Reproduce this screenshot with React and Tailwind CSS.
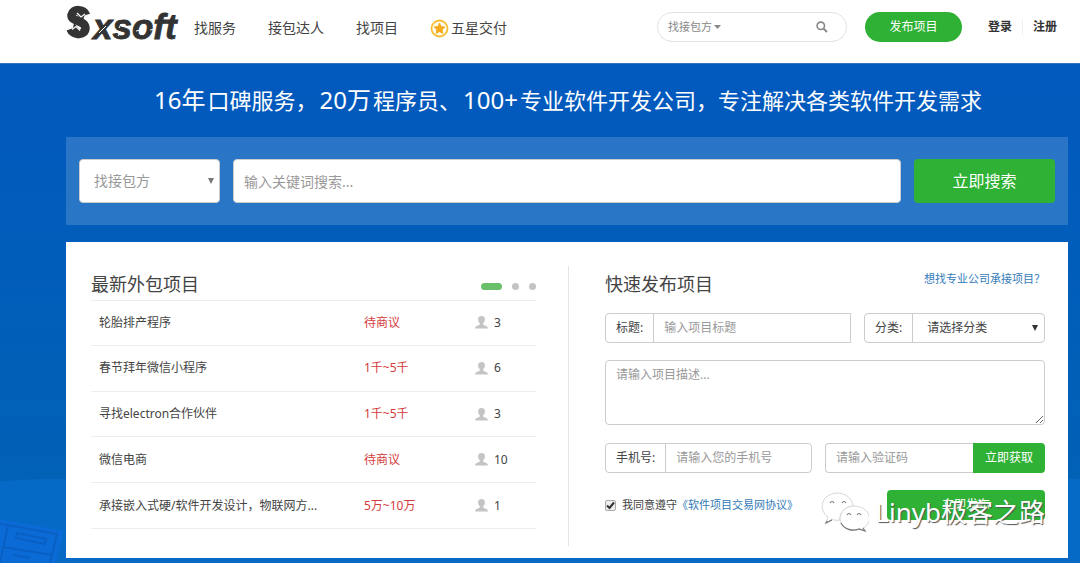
import React, { useState } from "react";

const NAV_LINKS = ["找服务", "接包达人", "找项目"];

const PROJECTS = [
  { title: "轮胎排产程序", budget: "待商议", people: 3 },
  { title: "春节拜年微信小程序", budget: "1千~5千", people: 6 },
  { title: "寻找electron合作伙伴", budget: "1千~5千", people: 3 },
  { title: "微信电商", budget: "待商议", people: 10 },
  { title: "承接嵌入式硬/软件开发设计，物联网方...", budget: "5万~10万", people: 1 },
];

function Logo() {
  return (
    <svg width="118" height="46" viewBox="0 0 118 46" className="overflow-visible" role="img" aria-label="Sxsoft">
      <path
        d="M20 15 C18 9 7 8 5.500 15 C5 22 19 20 19.500 28 C19.500 36 7 36 4.500 29"
        fill="none"
        stroke="#333"
        strokeWidth="8.500"
      />
      <path d="M9 13 L19 13 L17 21 Z M16 32 L6 32 L8 23 Z" fill="#333" />
      <path d="M11 13 L15 17 L19 14 M14 30.500 L10 26.500 L6 29.500" fill="none" stroke="#fff" strokeWidth="1.200" />
      <text
        x="27"
        y="39"
        fill="#333"
        stroke="#333"
        strokeWidth="0.800"
        fontSize="35"
        fontWeight="700"
        fontStyle="italic"
        fontFamily="Liberation Sans, sans-serif"
      >
        xsoft
      </text>
      <path
        d="M33 33 L40 26 M55 24 L53 28 M55 32 L52 36 M70 31 L75 30 M84 30 L89 29"
        stroke="#fff"
        strokeWidth="1"
      />
    </svg>
  );
}

function StarIcon() {
  return (
    <svg width="19" height="19" viewBox="0 0 19 19" aria-hidden="true">
      <circle cx="9.500" cy="9.500" r="8" fill="#fffdf2" stroke="#f6bd32" strokeWidth="1.800" />
      <path
        d="M9.500 4 L11.200 7.500 L15 8 L12.200 10.700 L12.900 14.500 L9.500 12.700 L6.100 14.500 L6.800 10.700 L4 8 L7.800 7.500 Z"
        fill="#f5ab1c"
        stroke="#f5ab1c"
        strokeWidth="0.800"
      />
    </svg>
  );
}

function SearchIcon() {
  return (
    <svg width="12" height="12" viewBox="0 0 12 12" fill="none" stroke="#888" aria-hidden="true">
      <circle cx="4.800" cy="4.800" r="3.700" strokeWidth="1.600" />
      <path d="M7.600 7.600 L11 11" strokeWidth="2" />
    </svg>
  );
}

function UserIcon() {
  return (
    <svg width="13" height="13" viewBox="0 0 13 13" fill="#c4c4c4" aria-hidden="true">
      <path d="M6.500 0 C8.900 0 10 1.500 9.900 3.500 C9.900 5.200 9.100 6.400 8.200 7.200 L8.200 8.500 C9 9.500 12.800 9.600 13 12.500 L0 12.500 C0.200 9.600 4 9.500 4.800 8.500 L4.800 7.200 C3.900 6.400 3.100 5.200 3.100 3.500 C3 1.500 4.100 0 6.500 0 Z" />
    </svg>
  );
}

function Caret({ className }) {
  return (
    <svg width="6" height="6" viewBox="0 0 6 6" className={className} fill="currentColor" aria-hidden="true">
      <path d="M0 0 L6 0 L3 6 Z" />
    </svg>
  );
}

function Header() {
  return (
    <header className="h-[63px] bg-white pl-[66px] pr-[23px]">
      <div className="flex h-[54px] items-center">
        <a href="#" className="-mt-2 mr-2.5 shrink-0">
          <Logo />
        </a>
        <nav className="flex items-center gap-8 pt-0.5 text-sm text-[#444]">
          {NAV_LINKS.map((link) => (
            <a key={link} href="#">
              {link}
            </a>
          ))}
          <a href="#" className="flex items-center gap-0.5">
            <StarIcon />
            五星交付
          </a>
        </nav>

        <div className="ml-auto flex items-center text-xs">
          <div className="flex h-[30px] w-[190px] items-center rounded-full border border-[#e2e2e2] pl-2.5 pr-[18px] text-[11px] text-[#888]">
            <button type="button" className="flex shrink-0 items-center gap-0.5">
              找接包方
              <svg width="7" height="4" viewBox="0 0 7 4" fill="#888" aria-hidden="true">
                <path d="M0 0 L7 0 L3.500 4 Z" />
              </svg>
            </button>
            <input aria-label="搜索" className="min-w-0 flex-1 bg-transparent outline-none" />
            <button type="button" aria-label="提交搜索">
              <SearchIcon />
            </button>
          </div>
          <button type="button" className="ml-[18px] h-[30px] w-[97px] rounded-full bg-[#2eb135] text-white">
            发布项目
          </button>
          <a href="#" className="ml-[26px] border-r border-[#eee] pr-2.5 font-bold text-[#333]">
            登录
          </a>
          <a href="#" className="pl-2.5 font-bold text-[#333]">
            注册
          </a>
        </div>
      </div>
    </header>
  );
}

function Backdrop() {
  return (
    <svg
      className="absolute bottom-0 left-0 h-[84px] w-full"
      viewBox="0 0 1080 84"
      preserveAspectRatio="none"
      aria-hidden="true"
    >
      <path d="M0 2 L40 0 L1080 0 L1080 84 L0 84 Z" fill="#056ac5" />
      <path d="M0 40 L64 52 L56 84 L0 84 Z" fill="#0b6bd6" />
      <g fill="none" stroke="#0a5fc2" strokeWidth="2">
        <path d="M-4 44 L57 55 L50 84 M8 46 L0 84 M2 68 L53 76" />
        <path d="M17 54 L46 60 L45 65 L16 59 Z M13 76 L30 79" />
      </g>
    </svg>
  );
}

function SearchBar() {
  return (
    <form className="flex gap-[13px] bg-white/16 px-[13px] py-[22px]" onSubmit={(e) => e.preventDefault()}>
      <div className="relative w-[141px] shrink-0">
        <select
          aria-label="搜索类型"
          className="h-11 w-full appearance-none rounded border border-[#ccc] bg-white px-3.5 text-sm text-[#999] outline-none"
        >
          <option>找接包方</option>
          <option>找项目</option>
        </select>
        <Caret className="pointer-events-none absolute right-1.5 top-[19px] text-[#777]" />
      </div>
      <input
        aria-label="关键词"
        placeholder="输入关键词搜索..."
        className="h-11 min-w-0 flex-1 rounded border border-[#ccc] bg-white px-2.5 text-sm outline-none placeholder:text-[#999]"
      />
      <button className="h-11 w-[141px] shrink-0 rounded bg-[#2eb135] text-base text-white">立即搜索</button>
    </form>
  );
}

function LatestProjects() {
  const [page, setPage] = useState(0);

  return (
    <section className="min-w-0 flex-1 pb-[17px]">
      <div className="flex h-[35px] items-center justify-between border-b border-[#eee]">
        <h2 className="pt-0.5 text-lg text-[#444]">最新外包项目</h2>
        <div className="flex gap-2.5 pt-1.5">
          {[0, 1, 2].map((i) => (
            <button
              key={i}
              type="button"
              aria-label={`第${i + 1}页`}
              onClick={() => setPage(i)}
              className={
                i === page ? "h-[7px] w-[21px] rounded-full bg-[#6abf6b]" : "h-[7px] w-[7px] rounded-full bg-[#c4c4c4]"
              }
            />
          ))}
        </div>
      </div>
      <table className="h-[228px] w-full table-fixed text-left text-xs text-[#444]">
        <colgroup>
          <col />
          <col className="w-[111px]" />
          <col className="w-[61px]" />
        </colgroup>
        <tbody>
          {PROJECTS.map((project) => (
            <tr key={project.title} className="border-b border-[#eee]">
              <td className="truncate pl-2">{project.title}</td>
              <td className="text-[#d43c3c]">{project.budget}</td>
              <td>
                <span className="flex items-center gap-1.5">
                  <UserIcon />
                  {project.people}
                </span>
              </td>
            </tr>
          ))}
        </tbody>
      </table>
    </section>
  );
}

function PublishForm() {
  const [agreed, setAgreed] = useState(true);

  return (
    <section className="w-[440px] shrink-0">
      <div className="flex h-[35px] items-center justify-between">
        <h2 className="text-lg text-[#444]">快速发布项目</h2>
        <a href="#" className="pb-2 text-[11px] text-[#337ab7]">
          想找专业公司承接项目？
        </a>
      </div>
      <form className="mt-3 text-xs text-[#444]" onSubmit={(e) => e.preventDefault()}>
        <div className="flex gap-[13px]">
          <div className="flex h-[30px] min-w-0 flex-1 rounded-l border border-[#ccc]">
            <label htmlFor="title" className="flex shrink-0 items-center border-r border-[#ccc] px-2.5">
              标题:
            </label>
            <input
              id="title"
              placeholder="输入项目标题"
              className="min-w-0 flex-1 px-2.5 outline-none placeholder:text-[#999]"
            />
          </div>
          <div className="relative flex h-[30px] w-[181px] rounded border border-[#ccc]">
            <label htmlFor="category" className="flex shrink-0 items-center border-r border-[#ccc] px-2.5">
              分类:
            </label>
            <select id="category" className="min-w-0 flex-1 appearance-none bg-transparent px-3.5 outline-none">
              <option>请选择分类</option>
              <option>网站开发</option>
            </select>
            <Caret className="pointer-events-none absolute right-1.5 top-[11px] text-[#333]" />
          </div>
        </div>

        <textarea
          aria-label="项目描述"
          placeholder="请输入项目描述..."
          className="mt-[17px] block h-[65px] w-full rounded border border-[#ccc] px-2.5 py-1.5 outline-none placeholder:text-[#999]"
        />

        <div className="mt-[18px] flex gap-[13px]">
          <div className="flex h-[30px] w-[207px] rounded border border-[#ccc]">
            <label htmlFor="phone" className="flex shrink-0 items-center border-r border-[#ccc] px-2.5">
              手机号:
            </label>
            <input
              id="phone"
              placeholder="请输入您的手机号"
              className="min-w-0 flex-1 px-2.5 outline-none placeholder:text-[#999]"
            />
          </div>
          <div className="flex h-[30px] min-w-0 flex-1">
            <input
              aria-label="验证码"
              placeholder="请输入验证码"
              className="min-w-0 flex-1 rounded-l border border-r-0 border-[#ccc] px-2.5 outline-none placeholder:text-[#999]"
            />
            <button type="button" className="w-[72px] shrink-0 rounded-r bg-[#2eb135] text-white">
              立即获取
            </button>
          </div>
        </div>

        <div className="relative mt-[17px] flex h-[30px] items-center justify-between">
          <div className="flex items-center text-[11px]">
            <input
              id="agree"
              type="checkbox"
              checked={agreed}
              onChange={(e) => setAgreed(e.target.checked)}
              className="peer h-[11px] w-[11px] appearance-none rounded-xs border border-[#aaa] bg-[#eee]"
            />
            <svg
              className="pointer-events-none invisible -ml-2.5 peer-checked:visible"
              width="9"
              height="9"
              viewBox="0 0 9 9"
              fill="none"
              stroke="#333"
              strokeWidth="2"
              aria-hidden="true"
            >
              <path d="M1 4.500 L3.500 7 L8 1.500" />
            </svg>
            <label htmlFor="agree" className="pl-[7px]">
              我同意遵守
            </label>
            <a href="#" className="text-[#337ab7]">
              《软件项目交易网协议》
            </a>
          </div>
          <button className="h-[30px] w-[158px] rounded bg-[#2eb135] text-white">立即发布</button>
          <Watermark />
        </div>
      </form>
    </section>
  );
}

function Watermark() {
  return (
    <div className="pointer-events-none absolute right-0 top-0.5 flex items-center gap-1.5 whitespace-nowrap">
      <svg width="48" height="40" viewBox="0 0 48 40" aria-hidden="true">
        <g fill="#fff" stroke="#ccc" strokeWidth="0.800">
          <path d="M16 1 C24 1 31 6 32 14 C24 15 18 21 19 28 C15 29 13 28 11 27 L5 31 L7 25 C-3 18 0 2 16 1 Z" />
          <path d="M33 14 C51 15 52 32 42 36 L44 39 L38 37 C28 40 19 34 19 27 C19 19 26 14 33 14 Z" />
        </g>
        <path
          d="M6 29 L5 31 L11 28 M42 36 L44 39 L38 37 C31 40 23 37 20 31"
          fill="none"
          stroke="#777"
          strokeWidth="1.200"
        />
        <path
          d="M9 11 Q11 8 13 11 M21 11 Q23 8 25 11 M26 23 Q28 20 30 23 M36 23 Q38 20 40 23"
          fill="none"
          stroke="#777"
          strokeWidth="1.200"
        />
      </svg>
      <span className="text-[26px] leading-10 text-white [text-shadow:1px_1px_1px_#555]">Linyb极客之路</span>
    </div>
  );
}

export default function App() {
  return (
    <div className="flex min-h-screen flex-col font-['Noto_Sans','Noto_Sans_CJK_SC',sans-serif]">
      <Header />
      <main className="relative flex-1 border-t border-[#2f71bd] bg-linear-to-b from-[#0259be] to-[#0263b4] pb-[5px] pl-[66px] pr-3">
        <Backdrop />
        <div className="relative">
          <h1 className="h-[73px] text-center text-[22px] leading-[73px] text-white">
            <span className="mx-0.5 text-2xl leading-none">16年</span>口碑服务，
            <span className="mx-0.5 text-2xl leading-none">20万</span>程序员、
            <span className="mx-0.5 text-2xl leading-none">100+</span>专业软件开发公司，专注解决各类软件开发需求
          </h1>
          <SearchBar />
          <div className="mt-[17px] flex bg-white pb-3 pl-[25px] pr-[23px] pt-6">
            <LatestProjects />
            <div className="ml-8 mr-9 w-px bg-[#e5e5e5]" />
            <PublishForm />
          </div>
        </div>
      </main>
    </div>
  );
}
